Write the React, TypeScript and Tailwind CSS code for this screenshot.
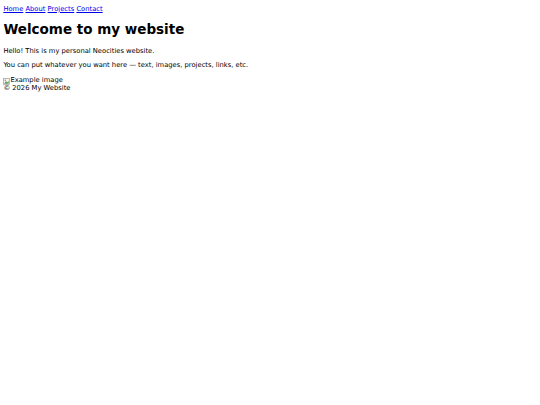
export default function App() {
    const links = ['Home', 'About', 'Projects', 'Contact'];

    return (
        <div className="min-h-[405px] bg-white px-[3.375px] pt-[5.5px] text-[6.75px] leading-[1.164] text-black font-['DejaVu_Sans',sans-serif]">
            <nav>
                {links.map((l, i) => (
                    <span key={l}>
                        <a href="#" className="text-[#0000ee] underline">{l}</a>
                        {i < links.length - 1 && ' '}
                    </span>
                ))}
            </nav>
            <h1 className="mt-[9px] mb-[9.5px] text-[13.5px] font-bold leading-[1.164]">Welcome to my website</h1>
            <p className="my-[6.75px]">Hello! This is my personal Neocities website.</p>
            <p className="mt-[6.75px] mb-[7.5px]">You can put whatever you want here — text, images, projects, links, etc.</p>
            <div className="flex h-[7.5px] items-center">
                <svg width="7" height="7" viewBox="0 0 16 16" className="shrink-0">
                    <rect x="1" y="1" width="14" height="14" fill="#f4f4f4" stroke="#999" strokeWidth="1.5" />
                    <path d="M3 12 L7 7 L10 10 L13 6 V13 H3 Z" fill="#6a9a5a" />
                    <circle cx="5" cy="5" r="1.5" fill="#c44" />
                </svg>
                <span>Example image</span>
            </div>
            <footer>© 2026 My Website</footer>
        </div>
    );
}
